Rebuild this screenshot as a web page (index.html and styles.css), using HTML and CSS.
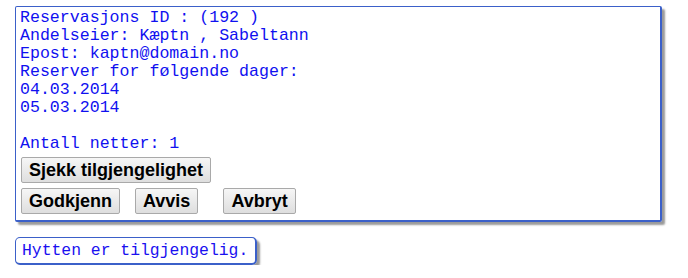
FILE: index.html
```html
<!DOCTYPE html>
<html>
<head>
<meta charset="utf-8">
<link rel="stylesheet" href="styles.css">
</head>
<body>
<div class="page">
  <div class="panel">
    <div class="info">
      <div class="line">Reservasjons ID : (192 )</div>
      <div class="line">Andelseier: Kæptn , Sabeltann</div>
      <div class="line">Epost: kaptn@domain.no</div>
      <div class="line">Reserver for følgende dager:</div>
      <div class="line">04.03.2014</div>
      <div class="line">05.03.2014</div>
      <div class="line">&nbsp;</div>
      <div class="line">Antall netter: 1</div>
    </div>
    <div class="row">
      <button class="btn">Sjekk tilgjengelighet</button>
    </div>
    <div class="row">
      <button class="btn">Godkjenn</button>
      <button class="btn gap1">Avvis</button>
      <button class="btn gap2">Avbryt</button>
    </div>
  </div>
  <div class="status">Hytten er tilgjengelig.</div>
</div>
</body>
</html>
```

FILE: styles.css
```css
html, body {
  margin: 0;
  padding: 0;
  background: #ffffff;
}
.page {
  padding: 6px 0 0 15px;
  display: flex;
  flex-direction: column;
  align-items: flex-start;
}
.panel {
  box-sizing: border-box;
  width: 647px;
  height: 216px;
  border: 1px solid #3b60c9;
  border-right-width: 2px;
  border-bottom-width: 2px;
  border-radius: 2px;
  box-shadow: 3px 3px 2px #9a9a9a;
  padding: 2px 4px 0 4px;
  display: flex;
  flex-direction: column;
}
.info {
  font-family: "Liberation Mono", "Courier New", monospace;
  font-size: 16.6px;
  line-height: 18px;
  color: #1010f0;
}
.line {
  white-space: pre;
}
.row {
  display: flex;
  padding-left: 1px;
}
.row + .row { margin-top: 5px; }
.info + .row { margin-top: 4px; }
.btn {
  box-sizing: border-box;
  height: 26px;
  margin: 0;
  padding: 0 7px;
  font-family: "Liberation Sans", Arial, sans-serif;
  font-weight: bold;
  font-size: 18px;
  color: #000;
  background: linear-gradient(#f6f6f6, #dedede);
  border: 1px solid #a9a9a9;
  border-radius: 2px;
}
.gap1 { margin-left: 15px; }
.gap2 { margin-left: 25px; }
.status {
  margin-top: 15px;
  box-sizing: border-box;
  width: 242px;
  height: 28px;
  border: 1px solid #3b60c9;
  border-right-width: 2px;
  border-bottom-width: 2px;
  border-radius: 5px;
  box-shadow: 3px 3px 2px #9a9a9a;
  padding: 4px 0 0 6px;
  font-family: "Liberation Mono", "Courier New", monospace;
  font-size: 16.4px;
  line-height: 18px;
  color: #1a10f0;
  white-space: pre;
}
```
